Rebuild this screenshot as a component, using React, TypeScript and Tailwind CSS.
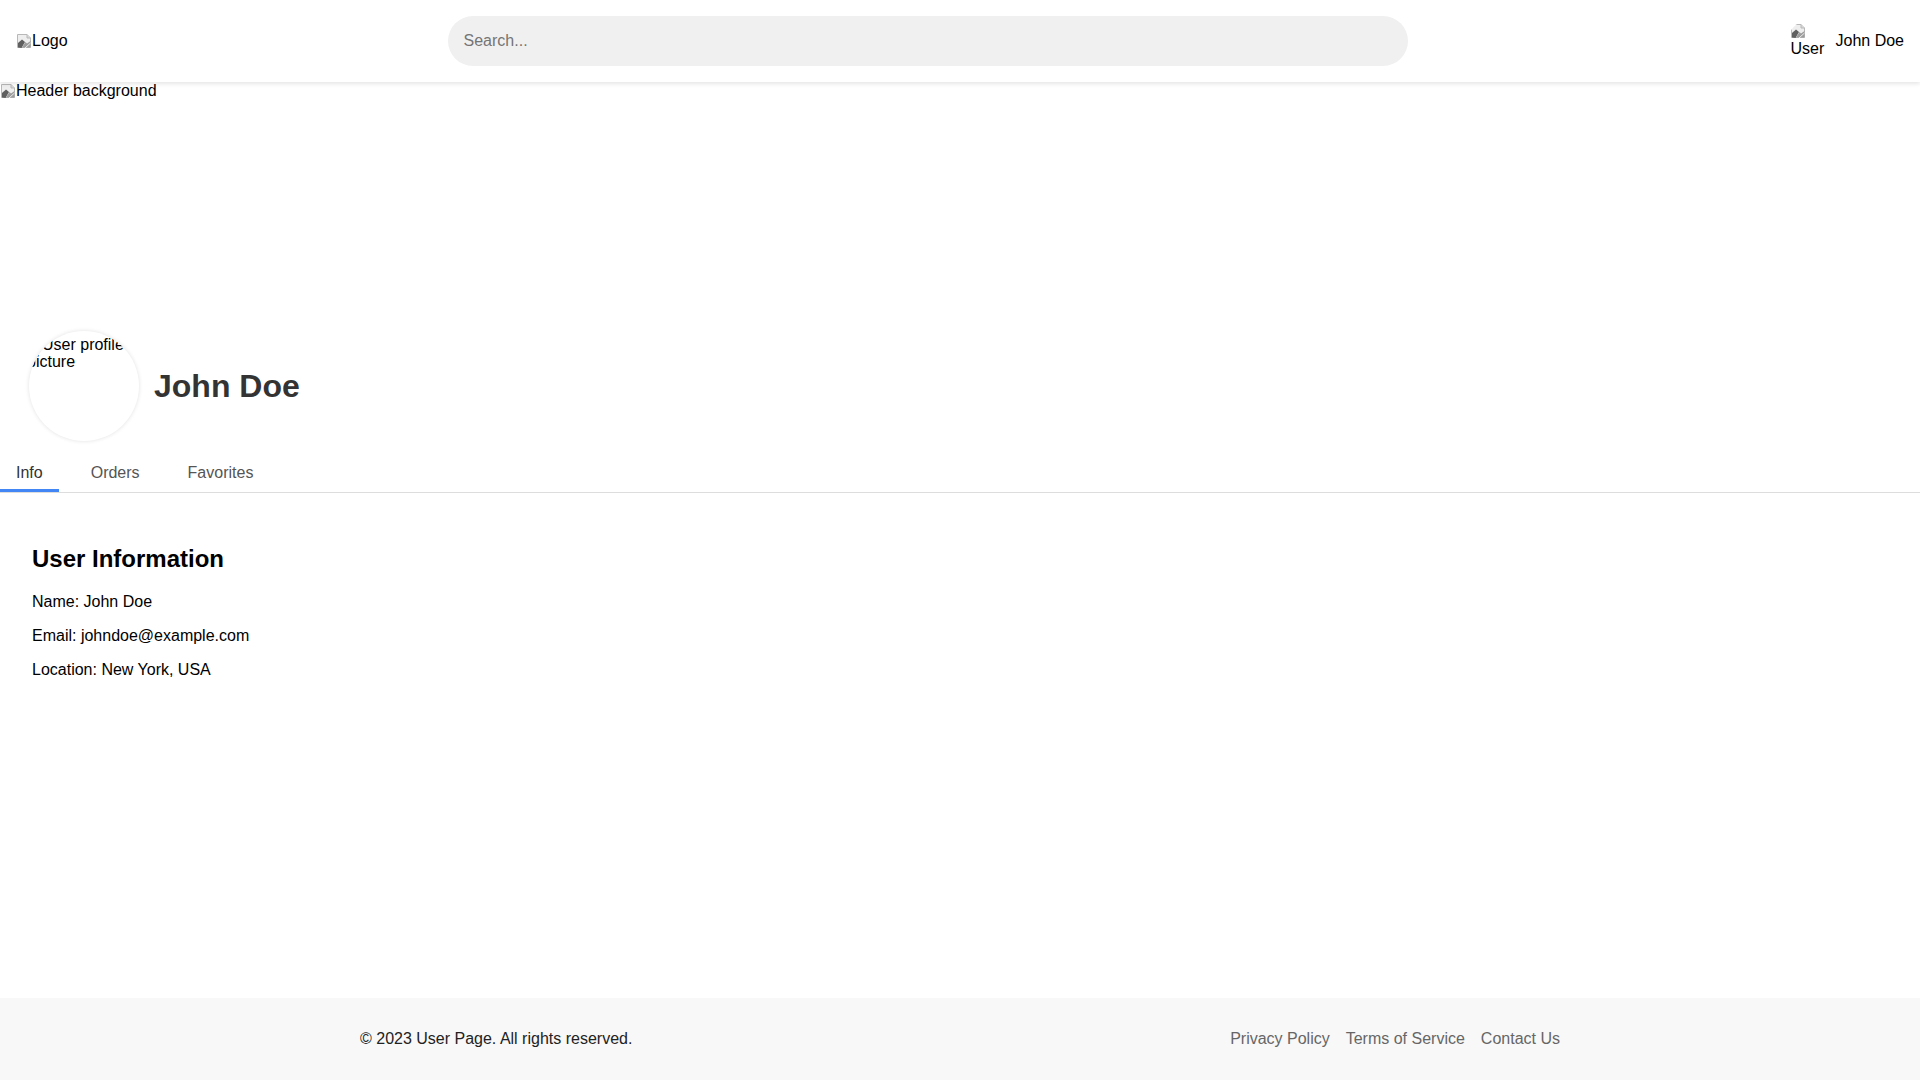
import { useState } from "react";

function BrokenImage({ className = "" }: { className?: string }) {
    return (
        <svg width="16" height="16" viewBox="0 0 16 16" className={`inline-block shrink-0 align-[-3px] ${className}`}>
            <path d="M1.5 1.5h9.5l3.5 3.5v9.5h-13z" fill="#eeeeee" stroke="#b8b8b8" strokeWidth="1" />
            <path d="M11 1.5v3.5h3.5" fill="#d8d8d8" stroke="#b8b8b8" strokeWidth="1" />
            <path d="M2 14.5V10l4-3.5 3 2.5-3.5 6z" fill="#5f5f5f" />
            <path d="M6 14.5l3.5-5.5 1.5 1.5 3.5-2.5v6.5z" fill="#9c9c9c" />
            <path d="M9 15l5.5-5" stroke="#ffffff" strokeWidth="0.8" />
        </svg>
    );
}

export default function App() {
    const [tab, setTab] = useState("Info");
    const tabs = ["Info", "Orders", "Favorites"];

    return (
        <div className="min-h-screen flex flex-col bg-white text-black font-['Liberation_Sans',Arial,sans-serif] text-[16px]">
            <header className="h-[82px] shrink-0 flex items-center justify-between px-4 bg-white shadow-[0_2px_4px_rgba(0,0,0,0.1)] relative z-10">
                <div className="flex items-center leading-[18px]">
                    <BrokenImage />
                    <span>Logo</span>
                </div>
                <input
                    className="w-[960px] h-[50px] bg-[#f0f0f0] rounded-[25px] px-4 outline-none placeholder-[#757575] text-[16px]"
                    placeholder="Search..."
                    type="text"
                />
                <div className="flex items-center gap-2">
                    <div className="w-10 h-10 rounded-full overflow-hidden text-[16px] leading-[18px] pt-[2px]">
                        <div className="pl-[2px] h-[17px]">
                            <BrokenImage className="align-top" />
                        </div>
                        <div className="pl-[3px]">User</div>
                        <div className="pl-[3px]">profile</div>
                    </div>
                    <span className="leading-[18px]">John Doe</span>
                </div>
            </header>

            <main className="flex-1">
                {/* Banner */}
                <div className="h-[249px] leading-[18px]">
                    <BrokenImage />
                    <span>Header background</span>
                </div>

                {/* Profile */}
                <div className="flex items-center gap-[15px] pl-[29px] pb-[12px]">
                    <div className="w-[110px] h-[110px] rounded-full overflow-hidden bg-white shadow-[0_0_4px_rgba(0,0,0,0.12)] shrink-0 pt-[5px] text-[16px] leading-[17px]">
                        <div className="-ml-[3px]">
                            <BrokenImage />
                            <span>User profile</span>
                            <br />
                            <span className="ml-[1px]">picture</span>
                        </div>
                    </div>
                    <h1 className="text-[32px] font-bold text-[#333] leading-[37px]">John Doe</h1>
                </div>

                {/* Tabs */}
                <div className="flex gap-4 border-b border-[#ddd]">
                    {tabs.map((t) => (
                        <button
                            key={t}
                            onClick={() => setTab(t)}
                            className={`px-4 pt-[11px] pb-[7px] leading-[18px] border-b-[3px] ${tab === t ? "border-[#4285f4] text-[#333]" : "border-transparent text-[#555]"}`}
                        >
                            {t}
                        </button>
                    ))}
                </div>

                {/* Content */}
                <div className="p-8">
                    <h2 className="text-[24px] font-bold leading-[27.6px] mt-[20px] mb-[20px]">User Information</h2>
                    <p className="leading-[18.4px] mb-4">Name: John Doe</p>
                    <p className="leading-[18.4px] mb-4">Email: johndoe@example.com</p>
                    <p className="leading-[18.4px]">Location: New York, USA</p>
                </div>
            </main>

            <footer className="h-[82px] shrink-0 bg-[#f8f8f8]">
                <div className="max-w-[1200px] mx-auto h-full flex items-center justify-between leading-[18px]">
                    <span className="text-[#222]">© 2023 User Page. All rights reserved.</span>
                    <div className="flex gap-4 text-[#666]">
                        <a href="#">Privacy Policy</a>
                        <a href="#">Terms of Service</a>
                        <a href="#">Contact Us</a>
                    </div>
                </div>
            </footer>
        </div>
    );
}
